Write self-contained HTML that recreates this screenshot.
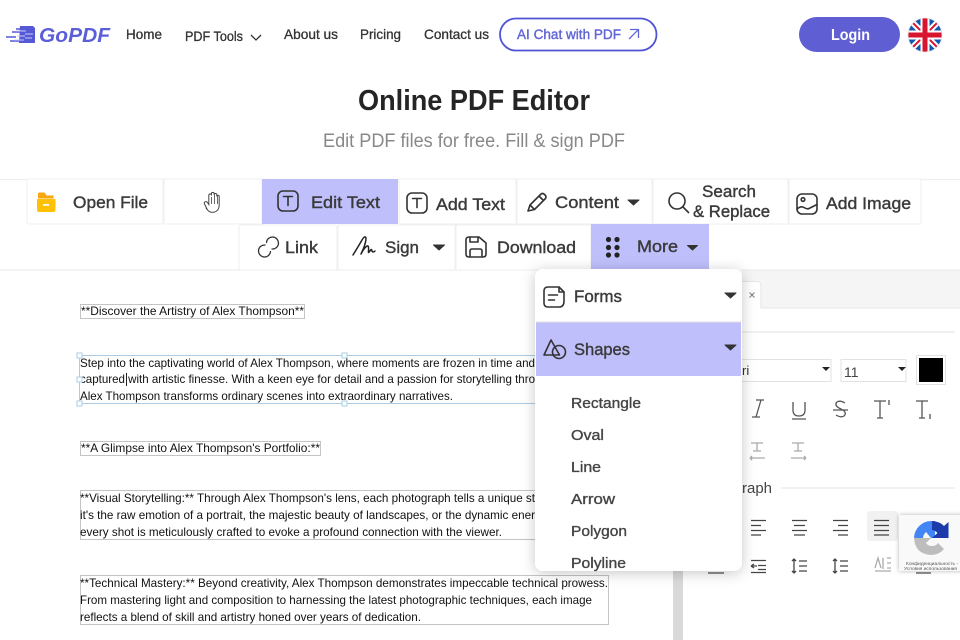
<!DOCTYPE html>
<html lang="en"><head><meta charset="utf-8"><title>Online PDF Editor</title>
<style>
html,body{margin:0;padding:0;background:#fff;width:960px;height:640px;overflow:hidden}
svg{display:block}
text{font-family:"Liberation Sans",sans-serif}
.nav{font-size:14px;fill:#333;stroke:#333;stroke-width:.3}
.btn{font-size:17px;fill:#3a3a3a;stroke:#3a3a3a;stroke-width:.4}
.doc{font-size:12px;fill:#111}
.item{font-size:14.5px;fill:#444;stroke:#444;stroke-width:.35}
.ic{fill:none;stroke:#333;stroke-width:1.6;stroke-linecap:round;stroke-linejoin:round}
.th{fill:none;stroke:#555;stroke-width:1.3}
.bd{fill:#fff;stroke:#f0f0f0;stroke-width:1.1}
</style></head><body>
<svg width="960" height="640" viewBox="0 0 960 640" xmlns="http://www.w3.org/2000/svg">
<defs>
<clipPath id="fc"><circle cx="925" cy="35" r="17"/></clipPath>
<filter id="sh" x="-20%" y="-10%" width="140%" height="120%"><feDropShadow dx="0" dy="2" stdDeviation="7" flood-color="#000" flood-opacity=".22"/></filter>
<filter id="sh2" x="-20%" y="-20%" width="140%" height="140%"><feDropShadow dx="0" dy="0" stdDeviation="2" flood-color="#000" flood-opacity=".3"/></filter>
</defs>

<!-- header -->
<path d="M6 37h10M12 32h8M16 29h8M10 41h12" fill="none" stroke="#5559d6" stroke-width="1.600"/>
<path d="M20 26h13l2 2v15H19z" fill="#5559d6"/>
<path d="M25 34h8M25 38h7M16 31h10M17 36h8M14 40h10" stroke="#c9cbf4" stroke-width="1" fill="none"/>
<text x="39" y="42" font-size="20" font-weight="700" font-style="italic" fill="#5a5ed8" textLength="71" lengthAdjust="spacingAndGlyphs">GoPDF</text>
<text class="nav" x="126" y="39" textLength="36" lengthAdjust="spacingAndGlyphs">Home</text>
<text class="nav" x="185" y="41" textLength="58" lengthAdjust="spacingAndGlyphs">PDF Tools</text>
<path d="M251 35l5 5 5-5" fill="none" stroke="#333" stroke-width="1.300"/>
<text class="nav" x="284" y="39" textLength="54" lengthAdjust="spacingAndGlyphs">About us</text>
<text class="nav" x="360" y="39" textLength="41" lengthAdjust="spacingAndGlyphs">Pricing</text>
<text class="nav" x="424" y="39" textLength="65" lengthAdjust="spacingAndGlyphs">Contact us</text>
<rect x="500" y="18.500" width="156.500" height="32" rx="16" fill="#fff" stroke="#4f53d8" stroke-width="1.800"/>
<text x="517" y="39" font-size="13.500" fill="#6166d6" stroke="#6166d6" stroke-width=".4" textLength="104" lengthAdjust="spacingAndGlyphs">AI Chat with PDF</text>
<path d="M629 39l9-9M630 29.500h8.500V38" fill="none" stroke="#6166d6" stroke-width="1.300"/>
<rect x="799" y="17" width="101" height="35" rx="17.500" fill="#5f5ed3"/>
<text x="831" y="40" font-size="15.500" font-weight="700" fill="#fff" textLength="39" lengthAdjust="spacingAndGlyphs">Login</text>
<g clip-path="url(#fc)">
<rect x="907" y="17" width="36" height="36" fill="#1257b0"/>
<path d="M908 18l34 34M942 18l-34 34" stroke="#fff" stroke-width="6"/>
<path d="M908 18l34 34M942 18l-34 34" stroke="#d8152f" stroke-width="2"/>
<path d="M925 17v36M907 35h36" stroke="#fff" stroke-width="9"/>
<path d="M925 17v36M907 35h36" stroke="#d8152f" stroke-width="5"/>
</g>
<circle cx="925" cy="35" r="17" fill="none" stroke="#ddd" stroke-width=".8"/>

<text x="358" y="110" font-size="29" font-weight="700" fill="#252525" textLength="232" lengthAdjust="spacingAndGlyphs">Online PDF Editor</text>
<text x="323" y="147" font-size="19" fill="#888" textLength="302" lengthAdjust="spacingAndGlyphs">Edit PDF files for free. Fill &amp; sign PDF</text>

<!-- doc/scroll -->
<rect x="673" y="270" width="10" height="370" fill="#d9d9d9"/>
<rect x="683" y="270" width="277" height="370" fill="#fff"/>
<rect x="80.500" y="304.500" width="224" height="14" fill="none" stroke="#c4c4c4"/>
<text class="doc" x="81" y="315" textLength="223" lengthAdjust="spacingAndGlyphs">**Discover the Artistry of Alex Thompson**</text>
<rect x="79.500" y="355.500" width="480" height="48" fill="none" stroke="#a9cce3"/>
<text class="doc" x="80" y="367" textLength="455" lengthAdjust="spacingAndGlyphs">Step into the captivating world of Alex Thompson, where moments are frozen in time and</text>
<text class="doc" x="80" y="383" textLength="455" lengthAdjust="spacingAndGlyphs">captured with artistic finesse. With a keen eye for detail and a passion for storytelling thro</text>
<text class="doc" x="80" y="400" textLength="373" lengthAdjust="spacingAndGlyphs">Alex Thompson transforms ordinary scenes into extraordinary narratives.</text>
<path d="M126.500 373v13" stroke="#222"/>
<g fill="#fff" stroke="#a9cce3"><rect x="77" y="353" width="5" height="5"/><rect x="342" y="353" width="5" height="5"/><rect x="77" y="377" width="5" height="5"/><rect x="77" y="401" width="5" height="5"/><rect x="342" y="401" width="5" height="5"/></g>
<rect x="80.500" y="441.500" width="240" height="14" fill="none" stroke="#c4c4c4"/>
<text class="doc" x="81" y="452" textLength="239" lengthAdjust="spacingAndGlyphs">**A Glimpse into Alex Thompson's Portfolio:**</text>
<rect x="80.500" y="490.500" width="480" height="49" fill="none" stroke="#c4c4c4"/>
<text class="doc" x="80" y="502" textLength="455" lengthAdjust="spacingAndGlyphs">**Visual Storytelling:** Through Alex Thompson's lens, each photograph tells a unique st</text>
<text class="doc" x="80" y="519" textLength="455" lengthAdjust="spacingAndGlyphs">it's the raw emotion of a portrait, the majestic beauty of landscapes, or the dynamic ener</text>
<text class="doc" x="80" y="536" textLength="422" lengthAdjust="spacingAndGlyphs">every shot is meticulously crafted to evoke a profound connection with the viewer.</text>
<rect x="80.500" y="575.500" width="528" height="49" fill="none" stroke="#c4c4c4"/>
<text class="doc" x="80" y="587" textLength="528" lengthAdjust="spacingAndGlyphs">**Technical Mastery:** Beyond creativity, Alex Thompson demonstrates impeccable technical prowess.</text>
<text class="doc" x="80" y="604" textLength="512" lengthAdjust="spacingAndGlyphs">From mastering light and composition to harnessing the latest photographic techniques, each image</text>
<text class="doc" x="80" y="621" textLength="341" lengthAdjust="spacingAndGlyphs">reflects a blend of skill and artistry honed over years of dedication.</text>

<!-- panel -->
<rect x="742" y="270" width="218" height="38" fill="#f5f5f5"/>
<path d="M742 282h15q4 0 4 4v22h-19z" fill="#fff"/>
<path d="M742 281.500h15q4 0 4 4v22.500h199" fill="none" stroke="#e6e6e6"/>
<path d="M749.500 292.500l5 5M754.500 292.500l-5 5" stroke="#777" stroke-width=".9"/>
<path d="M742 332h213" stroke="#e8e8e8" stroke-width="1.200"/>
<rect x="720" y="359.500" width="111" height="22" fill="#fff" stroke="#e2e2e2"/>
<text x="742" y="375" font-size="13" fill="#333">ri</text>
<path d="M822 367h8l-4 4z" fill="#222"/>
<rect x="841" y="359.500" width="65" height="22" fill="#fff" stroke="#e2e2e2"/>
<text x="844" y="377" font-size="14" fill="#444">11</text>
<path d="M898 367h8l-4 4z" fill="#222"/>
<rect x="916.500" y="355.500" width="29" height="29" fill="#fff" stroke="#e2e2e2"/>
<rect x="919" y="358" width="24" height="24" fill="#000"/>
<g class="th" stroke-width="1.100">
<path d="M756 417l5-17M756 400h8M752 417h8"/>
<path d="M793 402v8q0 6 6 6t6-6v-8M792 419h14"/>
<path d="M833 410h15M845 403q-5-3-8-1-3 3 2 6l4 2q4 3 1 6-3 2-8-1"/>
<path d="M874 401h12M880 401v17M877 418h6M889 400v5"/>
<path d="M916 401h12M922 401v17M919 418h6M930 414v5"/>
<path d="M751 443h12M757 443v8M753 451h8M750 458h15M750 458l2-2M750 458l2 2" stroke="#aaa"/>
<path d="M792 443h12M798 443v8M794 451h8M791 458h15M806 458l-2-2M806 458l-2 2" stroke="#aaa"/>
</g>
<text x="742" y="493" font-size="14.500" fill="#444" textLength="30" lengthAdjust="spacingAndGlyphs">raph</text>
<path d="M781 488h174" stroke="#e8e8e8" stroke-width="1.200"/>
<rect x="867" y="511" width="31" height="30" rx="3" fill="#f1f1f1"/>
<g class="th">
<path d="M751 520.500h15M751 525.500h10M751 530.500h15M751 535h10" stroke="#444"/>
<path d="M792 520.500h15M794 525.500h11M792 530.500h15M794 535h11" stroke="#444"/>
<path d="M833 520.500h15M838 525.500h10M833 530.500h15M838 535h10" stroke="#444"/>
<path d="M874 520.500h15M874 525.500h15M874 530.500h15M874 535h15" stroke="#444"/>
<path d="M751 560.500h15M758 565.500h8M751 566h6M751 566l3-2M751 566l3 2M758 569.500h8M751 572.500h15" stroke="#444"/>
<path d="M794 559v14M792 561l2-2 2 2M792 571l2 2 2-2M799 561h8M799 566h8M799 571h8" stroke="#444"/>
<path d="M835 559v14M833 561l2-2 2 2M833 571l2 2 2-2M840 561h8M840 566h8M840 571h8" stroke="#444"/>
<path d="M875 568l3-10 3 10M883 558v11M887 558h4M887 563h4M887 568h4M875 571h16" stroke="#aaa"/>
<path d="M708 573h16" stroke="#555"/><path d="M916 573h15" stroke="#555"/>
</g>

<!-- toolbar -->
<path d="M0 179.500h960M0 270h535" stroke="#eeeeee" stroke-width="1.200"/>
<path d="M742 270h218" stroke="#eeeeee" stroke-width="1.200"/>
<rect x="27" y="179" width="136" height="45" rx="2" class="bd"/>
<rect x="164" y="179" width="98" height="45" class="bd"/>
<rect x="262" y="179" width="136" height="45" fill="#bfbffb"/>
<rect x="399" y="179" width="117" height="45" class="bd"/>
<rect x="517" y="179" width="135" height="45" class="bd"/>
<rect x="653" y="179" width="135" height="45" class="bd"/>
<rect x="789" y="179" width="132" height="45" class="bd"/>
<rect x="239" y="225" width="98" height="45" rx="2" class="bd"/>
<rect x="338" y="225" width="117" height="45" class="bd"/>
<rect x="456" y="225" width="135" height="45" class="bd"/>
<rect x="591" y="224" width="118" height="46" fill="#bfbffb"/>

<!-- open file -->
<path d="M38 194q0-1.500 1.500-1.500h5l2 3h7v3H38z" fill="#f9a60e"/>
<path d="M37 199h18.500v11q0 2-2 2H39q-2 0-2-2z" fill="#ffc107"/>
<rect x="43" y="204" width="6" height="1.800" fill="#fff"/>
<text class="btn" x="73" y="208" textLength="75" lengthAdjust="spacingAndGlyphs">Open File</text>
<!-- hand -->
<path d="M207 209l-2.500-5q-.8-1.800.8-2.300t2.500 1.300l1 1.500v-9q0-1.600 1.300-1.600t1.300 1.600v-1.500q0-1.600 1.400-1.600t1.400 1.600v1q0-1.500 1.300-1.500t1.300 1.500v1.500q0-1.300 1.200-1.300t1.200 1.500v8q0 6-5 7.500h-3q-2.500-.5-4.500-3.300z" fill="none" stroke="#444" stroke-width="1"/>
<path d="M211.500 197v7M214.500 195v9M217.500 196v8" stroke="#444" stroke-width=".8"/>
<!-- edit text -->
<rect x="278" y="191" width="20" height="20" rx="5" class="ic"/>
<path d="M283.500 196.500h9M288 196.500v9" class="ic" stroke-width="1.300"/>
<text class="btn" x="311" y="208" textLength="69" lengthAdjust="spacingAndGlyphs">Edit Text</text>
<!-- add text -->
<rect x="407" y="193" width="20" height="20" rx="5" class="ic"/>
<path d="M412.500 198.500h9M417 198.500v9" class="ic" stroke-width="1.300"/>
<text class="btn" x="436" y="210" textLength="69" lengthAdjust="spacingAndGlyphs">Add Text</text>
<!-- content -->
<path d="M528 211l2-6 11-11q1.500-1 3 0l1.500 1.500q1 1.500 0 3l-11 11zM539 196l4.500 4.500M530 205l4 4" class="ic" stroke-width="1.300"/>
<text class="btn" x="555" y="208" textLength="64" lengthAdjust="spacingAndGlyphs">Content</text>
<path d="M628 200h11l-5.500 5z" fill="#333" stroke="#333" stroke-linejoin="round"/>
<!-- search -->
<circle cx="677" cy="201" r="8" class="ic" stroke-width="1.200"/><path d="M683 207l5.500 5.500" class="ic" stroke-width="1.800"/>
<text class="btn" x="702" y="197" textLength="54" lengthAdjust="spacingAndGlyphs">Search</text>
<text class="btn" x="693" y="217" textLength="77" lengthAdjust="spacingAndGlyphs">&amp; Replace</text>
<!-- add image -->
<rect x="797" y="194" width="20" height="20" rx="5" class="ic" stroke-width="1.300"/>
<circle cx="803" cy="199.500" r="1.800" class="ic" stroke-width="1"/>
<path d="M797 209q4-3.500 7-1.500t5 1 8-4" class="ic" stroke-width="1.100"/>
<text class="btn" x="826" y="209" textLength="85" lengthAdjust="spacingAndGlyphs">Add Image</text>
<!-- link -->
<path d="M265.500 243a6 6 0 1 1 5.500 6.500M269.500 252a6 6 0 1 1-5.500-6.500" fill="none" stroke="#333" stroke-width="1.300" stroke-linecap="round" transform="translate(1 -.5)"/>
<text class="btn" x="285" y="253" textLength="33" lengthAdjust="spacingAndGlyphs">Link</text>
<!-- sign -->
<path d="M353 255Q358 247 362 240 365 235 366 238 366 244 361 254 364 248 367 246 369 245 368.500 251 368 254 370 251 371.500 248 372 251 373 253 375 251" fill="none" stroke="#222" stroke-width="1.500" stroke-linecap="round" stroke-linejoin="round"/>
<text class="btn" x="385" y="253" textLength="34" lengthAdjust="spacingAndGlyphs">Sign</text>
<path d="M433.500 245h11l-5.500 5z" fill="#333" stroke="#333" stroke-linejoin="round"/>
<!-- download -->
<path d="M466 240q0-3 3-3h10l7 6v11q0 3-3 3h-14q-3 0-3-3zM470 237v5h8v-5M470 257v-6q0-2 2-2h8q2 0 2 2v6" class="ic" stroke-width="1.500"/>
<text class="btn" x="497" y="253" textLength="79" lengthAdjust="spacingAndGlyphs">Download</text>
<!-- more -->
<g fill="#222"><circle cx="608.500" cy="239.500" r="2.600"/><circle cx="617" cy="239.500" r="2.600"/><circle cx="608.500" cy="247.500" r="2.600"/><circle cx="617" cy="247.500" r="2.600"/><circle cx="608.500" cy="255" r="2.600"/><circle cx="617" cy="255" r="2.600"/></g>
<text class="btn" x="637" y="252" textLength="41" lengthAdjust="spacingAndGlyphs">More</text>
<path d="M687.500 245.500h10l-5 4.500z" fill="#333" stroke="#333" stroke-linejoin="round"/>

<!-- recaptcha -->
<rect x="899" y="515" width="70" height="56" fill="#f9f9f9" filter="url(#sh2)"/>
<path d="M918.500 538A13 13 0 0 1 931 525.500" fill="none" stroke="#4285f4" stroke-width="9"/>
<path d="M931 521h4v17h-4l-5-6z" fill="#4285f4"/>
<path d="M932 521q8 .5 12 5l4.500-4v16H932l5.500-5q-2-2.500-5.500-3z" fill="#1c3aa9"/>
<path d="M914 538h17l-5 5q2 3 6 3t6-3l6 6q-5 6-13 6-16-1-17-17z" fill="#bdbdbd"/>
<text x="906" y="565" font-size="4.500" fill="#555" textLength="52" lengthAdjust="spacingAndGlyphs">Конфиденциальность -</text>
<text x="904" y="570" font-size="4.500" fill="#555" textLength="53" lengthAdjust="spacingAndGlyphs">Условия использования</text>

<!-- dropdown -->
<rect x="535" y="269" width="207" height="302" rx="8" fill="#fff" filter="url(#sh)"/>
<path d="M536 322h205v54H536z" fill="#bfbffb"/>
<path d="M536 322h205" stroke="#e2e2e2"/>
<path d="M544 291q0-4 4-4h11l5 5v9q0 6-5 6h-11q-4 0-4-4z" class="ic" stroke-width="1.400"/>
<path d="M559 287v5h5M548.500 295h9M548.500 300h6" class="ic" stroke-width="1.200"/>
<text class="btn" x="574" y="302" textLength="48" lengthAdjust="spacingAndGlyphs">Forms</text>
<path d="M725 293h11l-5.500 5z" fill="#333" stroke="#333" stroke-linejoin="round"/>
<path d="M551 340l8.500 15H544z" class="ic" stroke-width="1.200"/>
<circle cx="559" cy="352" r="6.500" class="ic" stroke-width="1.200"/>
<text class="btn" x="574" y="355" textLength="56" lengthAdjust="spacingAndGlyphs">Shapes</text>
<path d="M725 345h11l-5.500 5z" fill="#333" stroke="#333" stroke-linejoin="round"/>
<text class="item" x="571" y="408" textLength="70" lengthAdjust="spacingAndGlyphs">Rectangle</text>
<text class="item" x="571" y="440" textLength="33" lengthAdjust="spacingAndGlyphs">Oval</text>
<text class="item" x="571" y="472" textLength="30" lengthAdjust="spacingAndGlyphs">Line</text>
<text class="item" x="571" y="504" textLength="44" lengthAdjust="spacingAndGlyphs">Arrow</text>
<text class="item" x="571" y="536" textLength="56" lengthAdjust="spacingAndGlyphs">Polygon</text>
<text class="item" x="571" y="568" textLength="55" lengthAdjust="spacingAndGlyphs">Polyline</text>
</svg>
</body></html>
